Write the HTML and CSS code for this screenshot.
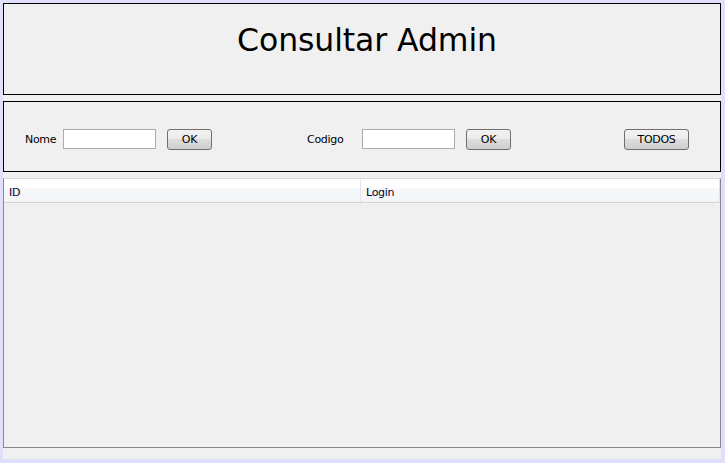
FILE: index.html
```html
<!DOCTYPE html>
<html>
<head>
<meta charset="utf-8">
<link rel="stylesheet" href="styles.css">
</head>
<body>
<div class="window">
  <header class="panel title-panel">
    <h1 class="title">Consultar Admin</h1>
  </header>
  <section class="panel search-panel">
    <div class="group group-nome">
      <label class="lbl">Nome</label>
      <input class="field" type="text">
      <button class="btn btn-ok">OK</button>
    </div>
    <div class="group group-codigo">
      <label class="lbl">Codigo</label>
      <input class="field" type="text">
      <button class="btn btn-ok">OK</button>
    </div>
    <button class="btn btn-todos">TODOS</button>
  </section>
  <section class="table">
    <div class="thead">
      <div class="th th-id">ID</div>
      <div class="th th-login">Login</div>
    </div>
    <div class="tbody"></div>
  </section>
</div>
</body>
</html>
```

FILE: styles.css
```css
html, body {
  margin: 0;
  padding: 0;
}
body {
  background: #e0e0fd;
  width: 725px;
  height: 463px;
  padding: 3px 4px 4px 3px;
  box-sizing: border-box;
  font-family: "DejaVu Sans", "Liberation Sans", sans-serif;
  font-size: 11px;
  color: #000;
}
.window {
  background: #f0f0f0;
  width: 718px;
  height: 456px;
  display: flex;
  flex-direction: column;
}
.panel {
  border: 1px solid #000;
  box-sizing: border-box;
}
.title-panel {
  height: 92px;
  display: flex;
  justify-content: center;
}
.title {
  margin: 0;
  padding-top: 16px;
  padding-left: 10px;
  font-weight: normal;
  font-size: 31.5px;
  line-height: 40px;
  letter-spacing: -0.1px;
}
.search-panel {
  margin-top: 6px;
  height: 71px;
  display: flex;
  align-items: center;
  padding-left: 21px;
  padding-top: 5px;
}
.group {
  display: flex;
  align-items: center;
}
.lbl {
  font-size: 11px;
  letter-spacing: -0.3px;
}
.group-nome .lbl { width: 38px; }
.group-codigo { margin-left: 95px; }
.group-codigo .lbl { width: 55px; }
.field {
  width: 93px;
  height: 20px;
  box-sizing: border-box;
  border: 1px solid #abadb3;
  background: #fff;
  margin: 0;
  padding: 0;
  margin-right: 11px;
}
.btn {
  height: 21px;
  box-sizing: border-box;
  border: 1px solid #707070;
  border-radius: 3px;
  background: linear-gradient(#f2f2f2 0%, #ebebeb 45%, #dddddd 50%, #cfcfcf 100%);
  font-family: "DejaVu Sans", "Liberation Sans", sans-serif;
  font-size: 11px;
  letter-spacing: -0.3px;
  padding: 0;
  margin: 0;
  color: #000;
}
.btn-ok { width: 45px; }
.btn-todos {
  width: 65px;
  margin-left: 113px;
}
.table {
  margin-top: 6px;
  height: 270px;
  border: 1px solid #828790;
  border-top-color: #d8d8d8;
  box-sizing: border-box;
  display: flex;
  flex-direction: column;
}
.thead {
  display: flex;
  height: 23px;
  background: linear-gradient(#ffffff 0%, #ffffff 40%, #f7f8f9 41%, #f3f4f6 100%);
  border-bottom: 1px solid #d5d5d5;
  border-right: 1px solid #e3e3e3;
}
.th {
  box-sizing: border-box;
  padding-left: 5px;
  padding-top: 7px;
  font-size: 11px;
  color: #000030;
  letter-spacing: -0.3px;
}
.th-id {
  width: 357px;
  border-right: 1px solid #e5e5e5;
}
.th-login {
  flex: 1;
}
.tbody {
  flex: 1;
}
```
